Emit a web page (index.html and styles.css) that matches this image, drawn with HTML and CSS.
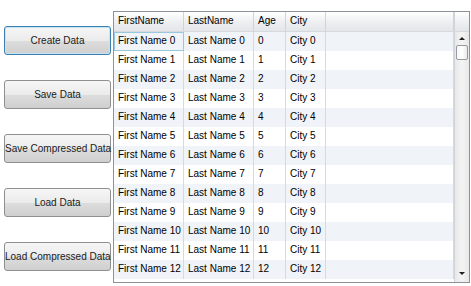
FILE: index.html
```html
<!DOCTYPE html>
<html lang="en">
<head>
    <meta charset="UTF-8">
    <title>Data Grid</title>
    <link rel="stylesheet" href="styles.css">
</head>
<body>
    <div class="window">
        <div class="actions">
            <button class="btn default">Create Data</button>
            <button class="btn">Save Data</button>
            <button class="btn">Save Compressed Data</button>
            <button class="btn">Load Data</button>
            <button class="btn">Load Compressed Data</button>
        </div>

        <div class="grid">
            <div class="row head">
                <div class="cell c1">FirstName</div>
                <div class="cell c2">LastName</div>
                <div class="cell c3">Age</div>
                <div class="cell c4">City</div>
                <div class="cell fill"></div>
                <div class="cell corner"></div>
            </div>
            <div class="body">
                <div class="rows" id="rows"></div>
                <div class="scrollbar">
                    <div class="arrow up"></div>
                    <div class="thumb"></div>
                    <div class="track"></div>
                    <div class="arrow down"></div>
                </div>
            </div>
        </div>
    </div>

    <script>
        // fill the grid with the sample people
        const rows = document.getElementById('rows');
        for (let i = 0; i <= 12; i++) {
            const row = document.createElement('div');
            row.className = 'row' + (i % 2 === 0 ? ' alt' : '');
            row.innerHTML =
                '<div class="cell c1' + (i === 0 ? ' focus' : '') + '">First Name ' + i + '</div>' +
                '<div class="cell c2">Last Name ' + i + '</div>' +
                '<div class="cell c3">' + i + '</div>' +
                '<div class="cell c4">City ' + i + '</div>' +
                '<div class="cell fill"></div>';
            rows.appendChild(row);
        }
    </script>
</body>
</html>
```

FILE: styles.css
```css
html, body {
    margin: 0;
    padding: 0;
    background: #ffffff;
    font-family: "Liberation Sans", Arial, sans-serif;
    font-size: 10px;
    color: #000;
}

.window {
    display: flex;
    height: 286px;
}

.actions {
    width: 113px;
    display: flex;
    flex-direction: column;
    gap: 25px;
    padding: 26px 0 0 4px;
    box-sizing: border-box;
}

.btn {
    width: 107px;
    height: 29px;
    padding: 0;
    font-family: inherit;
    font-size: 10px;
    color: #1a1a1a;
    border: 1px solid #8e8f8f;
    border-radius: 3px;
    background: linear-gradient(#f6f6f6 0%, #ebebeb 50%, #dddddd 51%, #cfcfcf 100%);
    white-space: nowrap;
}

.btn.default {
    border-color: #3c7fb1;
    box-shadow: inset 0 0 0 1px #c4e5f6;
}

.grid {
    margin-top: 11px;
    width: 357px;
    height: 272px;
    border: 1px solid #8e9399;
    box-sizing: border-box;
    display: flex;
    flex-direction: column;
    overflow: hidden;
}

.row {
    display: flex;
    height: 19px;
}

.row.alt {
    background: #f0f3f8;
}

.cell {
    box-sizing: border-box;
    padding-left: 4px;
    line-height: 18px;
    border-right: 1px solid #d6d9dd;
    white-space: nowrap;
    overflow: hidden;
}

.c1 { width: 70px; }
.c2 { width: 70px; }
.c3 { width: 32px; }
.c4 { width: 40px; }
.fill { flex: 1; }

.cell.focus {
    border: 1px solid #99c7dc;
    line-height: 16px;
    padding-left: 3px;
}

.head {
    height: 19px;
    background: linear-gradient(#ffffff, #eef0f2 50%, #e3e6ea);
    border-bottom: 1px solid #d5d8dc;
}

.head .cell {
    border-right-color: #d0d4d8;
}

.head .corner {
    width: 15px;
    border-right: none;
    border-left: 1px solid #d0d4d8;
}

.body {
    flex: 1;
    display: flex;
    overflow: hidden;
}

.rows {
    flex: 1;
}

.scrollbar {
    width: 15px;
    box-sizing: border-box;
    border-left: 1px solid #d0d4d8;
    background: linear-gradient(90deg, #e8e8e8, #f4f4f4 50%, #e8e8e8);
    display: flex;
    flex-direction: column;
    align-items: center;
}

.arrow {
    width: 0;
    height: 0;
    border-left: 3px solid transparent;
    border-right: 3px solid transparent;
}

.arrow.up {
    margin-top: 5px;
    border-bottom: 3px solid #202020;
}

.arrow.down {
    margin-bottom: 7px;
    border-top: 3px solid #202020;
}

.thumb {
    margin-top: 5px;
    width: 12px;
    height: 15px;
    box-sizing: border-box;
    border: 1px solid #979a9e;
    border-radius: 2px;
    background: linear-gradient(90deg, #f7f7f7, #ffffff 50%, #e9e9e9);
}

.track {
    flex: 1;
}
```
